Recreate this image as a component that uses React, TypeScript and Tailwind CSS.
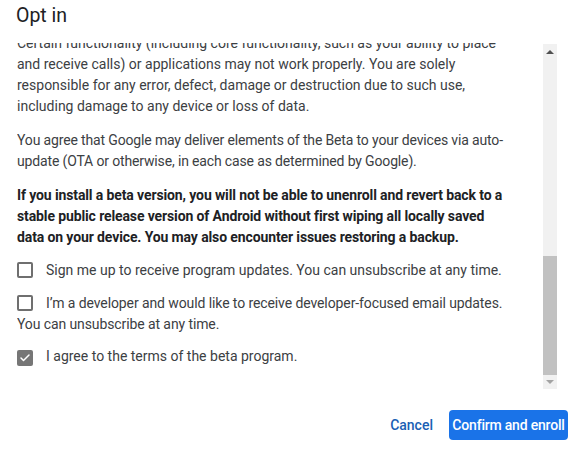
import { Check } from 'lucide-react'

const font = { fontFamily: 'Roboto, "Noto Sans", Arial, sans-serif' }

function Box({ checked }: { checked?: boolean }) {
  if (checked) {
    return (
      <span className="mr-[13px] inline-flex h-4 w-4 items-center justify-center rounded-[2px] bg-[#767676] align-[-3px]">
        <Check className="h-3 w-3 text-white" strokeWidth={3} />
      </span>
    )
  }
  return (
    <span className="mr-[13px] inline-block h-4 w-4 rounded-[2px] border-2 border-[#6f6f6f] align-[-3px]" />
  )
}

function Scrollbar() {
  return (
    <div className="mt-[1px] mb-[3px] flex w-[14px] flex-col bg-[#f1f1f1]">
      <div className="flex h-[16px] items-center justify-center">
        <span className="h-0 w-0 border-x-[4px] border-b-[4px] border-x-transparent border-b-[#505050]" />
      </div>
      <div className="flex-1" />
      <div className="h-[119px] bg-[#c1c1c1]" />
      <div className="flex h-[14px] items-center justify-center">
        <span className="h-0 w-0 border-x-[4px] border-t-[4px] border-x-transparent border-t-[#a3a3a3]" />
      </div>
    </div>
  )
}

export default function App() {
  return (
    <div className="flex h-[451px] w-[584px] flex-col bg-white text-[#3c4043]" style={font}>
      <div className="h-[43px] pl-4 pt-[3px]">
        <h2 className="text-[19.5px] leading-[26px] text-[#202124]">Opt in</h2>
      </div>

      <div className="flex h-[349px] pl-[17px] pr-[27px]">
        <div className="flex-1 overflow-hidden">
          <div className="-mt-[10px] whitespace-nowrap text-[14px] leading-[21px]">
            <p className="mb-[13px]">
              Certain functionality (including core functionality, such as your ability to place<br />
              and receive calls) or applications may not work properly. You are solely<br />
              responsible for any error, defect, damage or destruction due to such use,<br />
              including damage to any device or loss of data.
            </p>
            <p className="mb-[13px] tracking-[-0.15px]">
              You agree that Google may deliver elements of the Beta to your devices via auto-<br />
              update (OTA or otherwise, in each case as determined by Google).
            </p>
            <p className="mb-[12px] font-bold tracking-[-0.12px] text-[#202124]">
              If you install a beta version, you will not be able to unenroll and revert back to a<br />
              stable public release version of Android without first wiping all locally saved<br />
              data on your device. You may also encounter issues restoring a backup.
            </p>
            <p className="mb-[12px]">
              <Box />
              Sign me up to receive program updates. You can unsubscribe at any time.
            </p>
            <p className="mb-[11px] tracking-[-0.1px]">
              <Box />
              I’m a developer and would like to receive developer-focused email updates.<br />
              You can unsubscribe at any time.
            </p>
            <p>
              <Box checked />
              I agree to the terms of the beta program.
            </p>
          </div>
        </div>
        <Scrollbar />
      </div>

      <div className="flex items-center justify-end gap-4 pr-4 pt-[18px]">
        <button className="text-[14px] font-medium text-[#1a5fb4]">Cancel</button>
        <button className="h-[30px] w-[119px] rounded-[4px] bg-[#1a73e8] text-[14px] font-medium tracking-[-0.2px] text-white">
          Confirm and enroll
        </button>
      </div>
    </div>
  )
}
